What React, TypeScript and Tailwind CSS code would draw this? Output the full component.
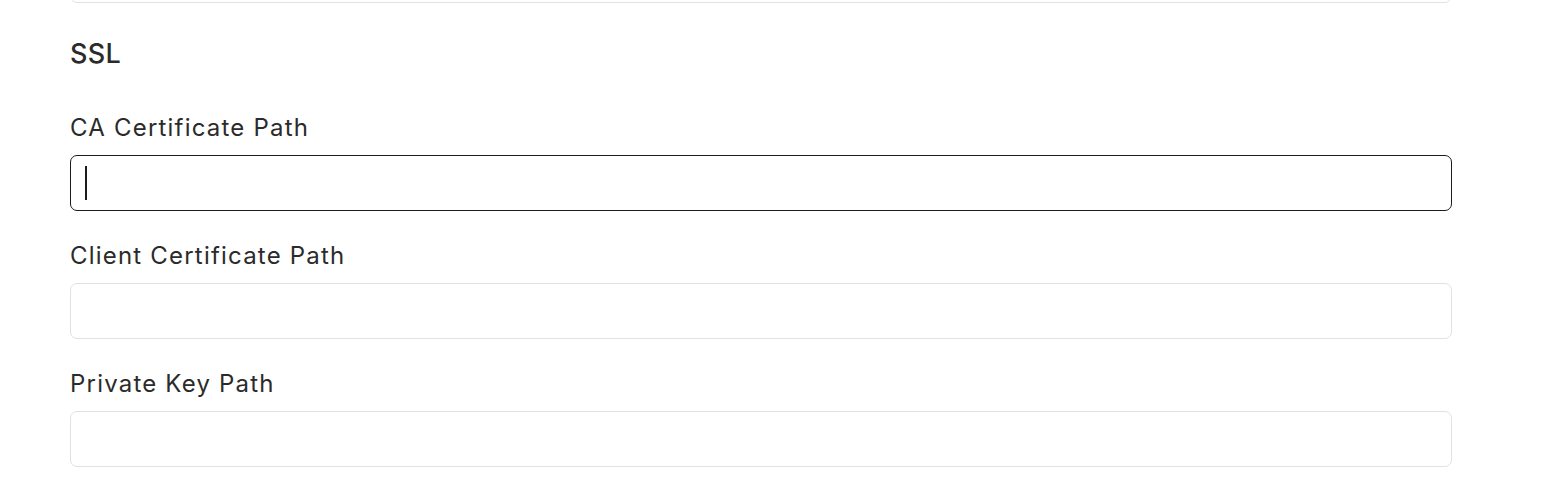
const fields = [
  { label: "CA Certificate Path", focused: true },
  { label: "Client Certificate Path", focused: false },
  { label: "Private Key Path", focused: false },
];

export default function App() {
  return (
    <div
      className="w-[1568px] h-[488px] overflow-hidden bg-white text-[#2b2b2b]"
      style={{ fontFamily: "Inter, 'Noto Sans', sans-serif" }}
    >
      <div className="w-[1382px] ml-[70px]">
        {/* previous field, scrolled off */}
        <div className="h-[56px] mt-[-53px] rounded-[7px] border border-[#e2e2e2]" />

        <h2 className="mt-[33px] h-[36px] leading-[36px] text-[27px] font-medium tracking-[0.3px]">
          SSL
        </h2>

        <div className="mt-[40px] flex flex-col gap-[29px]">
          {fields.map((f) => (
            <div key={f.label} className="flex flex-col">
              <label className="h-[32px] leading-[32px] text-[24px] tracking-[1.2px] mb-[11px]">
                {f.label}
              </label>
              {f.focused ? (
                <div className="h-[56px] rounded-[7px] border-[1.5px] border-[#1c1c1c] flex items-center pl-[14px]">
                  <div className="w-[2px] h-[34px] bg-[#1c1c1c]" />
                </div>
              ) : (
                <input
                  className="h-[56px] rounded-[7px] border border-[#e2e2e2] px-4 outline-none"
                  type="text"
                />
              )}
            </div>
          ))}
        </div>
      </div>
    </div>
  );
}
